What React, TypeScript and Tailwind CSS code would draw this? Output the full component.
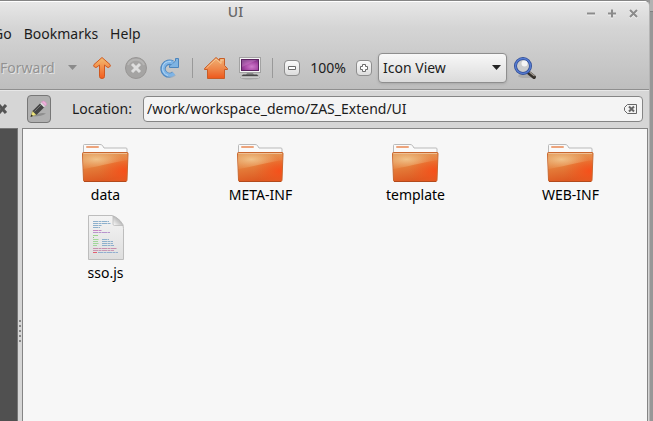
import React, { useState } from "react";

const files = [
  { name: "data", kind: "folder" },
  { name: "META-INF", kind: "folder" },
  { name: "template", kind: "folder" },
  { name: "WEB-INF", kind: "folder" },
  { name: "sso.js", kind: "script" },
];

function FolderIcon() {
  return (
    <svg width="48" height="48" viewBox="1 -4 48 48" aria-hidden="true">
      <defs>
        <linearGradient id="folderBody" x1="0" y1="0" x2="0.25" y2="1">
          <stop offset="0" stopColor="#df9450" />
          <stop offset="0.5" stopColor="#e5803c" />
          <stop offset="1" stopColor="#dd5a22" />
        </linearGradient>
        <radialGradient id="folderShine" cx="0.3" cy="0.4" r="0.6">
          <stop offset="0" stopColor="#f4d09a" stopOpacity="0.8" />
          <stop offset="1" stopColor="#f0b982" stopOpacity="0.15" />
        </radialGradient>
        <radialGradient id="folderGlow" cx="0.95" cy="0.65" r="0.6">
          <stop offset="0" stopColor="#f6501a" />
          <stop offset="1" stopColor="#f05a20" stopOpacity="0" />
        </radialGradient>
      </defs>
      <path d="M2.500 18V6.500q0-1 1-1H19q1.500 0 2.500 1l1.500 2.500H45q1 0 1 1V18z" fill="#fafafa" stroke="#b9b9b9" />
      <rect x="5" y="7" width="13" height="2" rx="1" fill="#eda47c" />
      <path d="M1.500 14.500q0-1 1-1h43.500q1 0 1 1L46 41q0 1.500-1.500 1.500H4Q2.500 42.500 2.500 41z" fill="url(#folderBody)" stroke="#c9672f" />
      <path d="M2 14h44.500L45.500 42H3z" fill="url(#folderGlow)" />
      <path d="M2 14h44.500v7Q35 23 22 26T2 30z" fill="url(#folderShine)" />
      <path d="M2.500 14.500h43.500" stroke="#eebf94" />
      <path d="M3 42.500h42" stroke="#b34a1c" />
    </svg>
  );
}

const codeLines: [number, number, number, string][] = [
  [11, 7, 16, "#8db0cc"], [11, 9, 18, "#8db0cc"], [11, 11, 9, "#8db0cc"], [11, 13, 7, "#8db0cc"],
  [11, 16, 9, "#c687c4"], [11, 18, 17, "#b895cd"], [11, 21, 5, "#9bd58d"], [11, 23, 1, "#8bc581"],
  [11, 25, 6, "#a1d79a"], [20, 25, 7, "#8db0cc"], [11, 27, 5, "#a1d79a"], [20, 27, 11, "#8db0cc"],
  [11, 29, 6, "#a1d79a"], [20, 29, 11, "#8db0cc"], [11, 31, 4, "#a1d79a"], [20, 31, 12, "#8db0cc"],
  [11, 34, 24, "#c88fad"], [11, 36, 21, "#c898b4"], [11, 38, 4, "#e35f70"], [16, 38, 20, "#92afd0"],
];

function ScriptIcon() {
  return (
    <svg width="48" height="48" viewBox="0 0 48 48" aria-hidden="true">
      <defs>
        <linearGradient id="paper" x1="0" y1="0" x2="0" y2="1">
          <stop offset="0" stopColor="#f4f4f4" />
          <stop offset="1" stopColor="#dedede" />
        </linearGradient>
        <linearGradient id="fold" x1="0" y1="1" x2="1" y2="0">
          <stop offset="0" stopColor="#ffffff" />
          <stop offset="0.5" stopColor="#c4c4c4" />
        </linearGradient>
      </defs>
      <path d="M6.500 2.500H30q4 1 8 5t3.500 8V46.500h-35z" fill="url(#paper)" stroke="#bdbdbd" />
      <path d="M31 3v8q0 1.500 1.500 1.500H41Q38 6 31 3z" fill="url(#fold)" stroke="#b4b4b4" strokeWidth="0.700" />
      {codeLines.map(([x, y, w, color], i) => (
        <path key={i} d={`M${x} ${y + 1.5}h${w}`} stroke={color} strokeDasharray="5 0.500 3 0.500" />
      ))}
    </svg>
  );
}

function UpIcon() {
  return (
    <svg width="20" height="24" viewBox="0 0 20 24" aria-hidden="true">
      <defs>
        <linearGradient id="up" x1="0" y1="0" x2="0" y2="1">
          <stop offset="0" stopColor="#f3bd72" />
          <stop offset="1" stopColor="#f35c1d" />
        </linearGradient>
      </defs>
      <path d="M10 1.500L18 8.500q1 1.500-.5 2.500t-2.500 0L12.500 9V20.500q0 2-2.500 2t-2.500-2V9L5 11q-1 1-2.500 0T2 8.500z" fill="url(#up)" stroke="#cf5820" strokeLinejoin="round" />
    </svg>
  );
}

function StopIcon() {
  return (
    <svg width="24" height="24" viewBox="0 0 24 24" aria-hidden="true">
      <circle cx="12" cy="12" r="10.500" fill="#a5a4a3" stroke="#989695" />
      <path d="M4 9a8.500 8 0 0 1 16 0" fill="none" stroke="#b5b4b3" strokeWidth="2" />
      <path d="M8 8l8 8M16 8l-8 8" stroke="#dedede" strokeWidth="3" />
    </svg>
  );
}

function ReloadIcon() {
  return (
    <svg width="22" height="24" viewBox="0 0 22 24" aria-hidden="true">
      <defs>
        <linearGradient id="reloadTail" x1="0" y1="0" x2="1" y2="1">
          <stop offset="0.700" stopColor="#4c85bd" />
          <stop offset="1" stopColor="#4c85bd" stopOpacity="0.300" />
        </linearGradient>
      </defs>
      <path d="M14.500 7A6.500 6.500 0 1 0 16 17.500" fill="none" stroke="url(#reloadTail)" strokeWidth="5.500" />
      <path d="M20.500 2.500V11.500H11.500V9.500L14 8 17.500 5V2.500z" fill="#7eb3e2" stroke="#4c85bd" />
      <path d="M15 7A6.500 6.500 0 1 0 16 17.500" fill="none" stroke="#7eb4e6" strokeWidth="3.500" />
      <path d="M13 5.500Q5 5 4.500 12.500 5 18 10 19.500" fill="none" stroke="#b3d6f4" />
    </svg>
  );
}

function HomeIcon() {
  return (
    <svg width="26" height="24" viewBox="0 0 26 24" aria-hidden="true">
      <defs>
        <linearGradient id="home" x1="0" y1="0" x2="0" y2="1">
          <stop offset="0" stopColor="#f0b477" />
          <stop offset="0.600" stopColor="#ee8144" />
          <stop offset="1" stopColor="#ee571b" />
        </linearGradient>
      </defs>
      <path d="M13 1.500L16.500 4.500V2.500H21.500V9.500L24.500 12.500V13.500H21.500V22.500H4.500V13.500H1.500V12.500z" fill="url(#home)" stroke="#c75d27" strokeLinejoin="round" />
      <path d="M3.500 12L13 3l5 4.500V4h2.500" fill="none" stroke="#f7cfa0" strokeWidth="0.800" />
    </svg>
  );
}

function ComputerIcon() {
  return (
    <svg width="24" height="24" viewBox="0 0 24 24" aria-hidden="true">
      <defs>
        <radialGradient id="screen" cx="0.600" cy="0.650" r="0.700">
          <stop offset="0" stopColor="#cf7ccb" />
          <stop offset="0.600" stopColor="#a545a3" />
          <stop offset="1" stopColor="#74307c" />
        </radialGradient>
      </defs>
      <rect x="1.500" y="1.500" width="21" height="15" fill="#f4f4f4" stroke="#a2a2a2" />
      <rect x="3.500" y="3.500" width="17" height="11" fill="url(#screen)" stroke="#5c2261" />
      <path d="M4 4h15L4 11z" fill="#e5b5e4" fillOpacity="0.25" />
      <path d="M9 17h6l1 2H8z" fill="#8a8a8a" />
      <ellipse cx="12" cy="21.500" rx="10" ry="2" fill="#a5a5a5" />
      <path d="M5 18.500h14l2 2H3z" fill="#484848" />
      <path d="M3 21h18" stroke="#efefef" />
    </svg>
  );
}

function SearchIcon() {
  return (
    <svg width="24" height="24" viewBox="0 0 24 24" aria-hidden="true">
      <ellipse cx="13" cy="20" rx="8" ry="2" fill="#969696" fillOpacity="0.500" />
      <path d="M16 17l5 4" stroke="#35312c" strokeWidth="4" strokeLinecap="round" />
      <path d="M16.500 16l5 4" stroke="#a49d93" strokeWidth="1.200" />
      <circle cx="10" cy="10" r="7.500" fill="#cbcccd" stroke="#2f4b93" strokeWidth="3" />
      <circle cx="10" cy="10" r="7.500" fill="none" stroke="#557bd0" strokeWidth="1.500" />
      <circle cx="11.500" cy="7.500" r="3" fill="#f4f4f4" />
    </svg>
  );
}

function PencilIcon() {
  return (
    <svg width="20" height="20" viewBox="0 0 20 20" className="shrink-0" aria-hidden="true">
      <path d="M4 17.500q8-5 13-3-4 3-13 3z" fill="#8e8e8e" />
      <path d="M2 17.500l1.500-5.500 4 3.500z" fill="#efe67e" stroke="#8f8a45" strokeWidth="0.500" />
      <path d="M3.500 12l8.500-8.500 4 4L7.500 16z" fill="#444" />
      <path d="M5.500 12.500l7.500-7.500" stroke="#777" />
      <path d="M11 4.500l4 4 1.500-1.500-4-4z" fill="#dcdcdc" />
      <path d="M12.500 3q2-2 4 0t0 4z" fill="#eeb0da" stroke="#d592c2" strokeWidth="0.700" />
      <path d="M1.500 18l1-2.500 1.500 1.500z" fill="#222" />
    </svg>
  );
}

function ZoomButton({ plus, onClick }: { plus?: boolean; onClick: () => void }) {
  return (
    <button
      type="button"
      onClick={onClick}
      aria-label={plus ? "Zoom in" : "Zoom out"}
      className="flex size-4 shrink-0 items-center justify-center rounded-sm border border-[#8e8e8e] bg-gradient-to-b from-[#fafafa] to-[#dddddd]"
    >
      <svg width="10" height="10" viewBox="0 0 10 10" className="shrink-0" aria-hidden="true">
        <path
          d={plus ? "M3.500 1.500h3v2h2v3h-2v2h-3v-2h-2v-3h2z" : "M1.500 3.500h7v3h-7z"}
          fill="#fff"
          stroke="#6b6b6b"
        />
      </svg>
    </button>
  );
}

function Separator() {
  return <div className="h-5 w-px shrink-0 bg-[#999999]" />;
}

export default function App() {
  const [path, setPath] = useState("/work/workspace_demo/ZAS_Extend/UI");
  const [zoom, setZoom] = useState(100);

  return (
    <div className="flex h-screen w-full overflow-hidden bg-[#979797] font-['Noto_Sans',sans-serif] text-sm leading-5 text-[#1c1c1c]">
      <div className="flex min-w-0 grow flex-col overflow-hidden rounded-tr-md border-t border-r border-[#858585] border-r-[#b5b5b5] bg-[#d6d6d6]">
        <div className="shrink-0 border-b border-[#8f8f8f] bg-gradient-to-b from-[#e8e8e8] via-[#d5d5d5] via-30% to-[#bebebe]">
          <header className="flex h-[23px] items-center border-t border-white pr-[7px] pb-0.5">
            <h1 className="grow pr-28 text-center text-sm font-medium text-[#686868]">UI</h1>
            <div className="flex shrink-0 gap-1 text-[#8b8b8b]">
              {[
                ["Minimize", "M4 9.500h8"],
                ["Maximize", "M4 9.500h8M8 5.500v8"],
                ["Close", "M5 6l7 7M12 6l-7 7"],
              ].map(([label, d]) => (
                <button key={label} type="button" aria-label={label} className="size-[17px]">
                  <svg width="17" height="17" viewBox="0 0 17 17" fill="none" strokeWidth="2" aria-hidden="true">
                    <path d={d} stroke="#f4f4f4" transform="translate(0 1)" />
                    <path d={d} stroke="currentColor" />
                  </svg>
                </button>
              ))}
            </div>
          </header>
          <nav className="-ml-[7px] flex h-5 items-center gap-3">
            <button type="button">Go</button>
            <button type="button">Bookmarks</button>
            <button type="button">Help</button>
          </nav>
          <div className="flex h-[45px] items-center pt-0.5">
            <button type="button" className="w-14 shrink-0 text-left text-[#929292] [text-shadow:1px_1px_0_#e4e4e4]">Forward</button>
            <button type="button" aria-label="Forward history" className="ml-3 shrink-0">
              <svg width="9" height="5" viewBox="0 0 9 5" className="fill-[#8a8a8a]" aria-hidden="true"><path d="M0 0h9L4.500 5z" /></svg>
            </button>
            <button type="button" aria-label="Up" className="ml-[15px] shrink-0"><UpIcon /></button>
            <button type="button" aria-label="Stop" className="ml-3 shrink-0"><StopIcon /></button>
            <button type="button" aria-label="Reload" className="mr-3 ml-2.5 shrink-0"><ReloadIcon /></button>
            <Separator />
            <button type="button" aria-label="Home" className="ml-2.5 shrink-0"><HomeIcon /></button>
            <button type="button" aria-label="Computer" className="mr-2.5 ml-[9px] shrink-0"><ComputerIcon /></button>
            <Separator />
            <div className="mr-1.5 ml-[11px] flex shrink-0 items-center">
              <ZoomButton onClick={() => setZoom(Math.max(25, zoom - 25))} />
              <span className="w-14 text-center">{zoom}%</span>
              <ZoomButton plus onClick={() => setZoom(zoom + 25)} />
            </div>
            <div className="relative w-[129px] shrink-0">
              <select
                aria-label="View mode"
                className="h-[30px] w-full appearance-none rounded-sm border border-[#8e8e8e] bg-gradient-to-b from-[#f8f8f8] to-[#dbdbdb] pl-1 text-sm shadow-sm"
              >
                <option>Icon View</option>
                <option>List View</option>
                <option>Compact View</option>
              </select>
              <svg width="9" height="5" viewBox="0 0 9 5" className="pointer-events-none absolute top-3 right-1.5" aria-hidden="true"><path d="M0 0h9L4.500 5z" fill="#222" /></svg>
            </div>
            <button type="button" aria-label="Search" className="ml-1.5 shrink-0"><SearchIcon /></button>
          </div>
        </div>

        <div className="flex h-[38px] shrink-0 items-center border-t border-[#e7e7e7] pr-1.5 pb-0.5">
          <button type="button" aria-label="Close side pane" className="-ml-0.5 w-[29px] shrink-0">
            <svg width="10" height="12" viewBox="0 0 10 12" aria-hidden="true"><path d="M1 2l7 8M8 2l-7 8" stroke="#555" strokeWidth="3" /></svg>
          </button>
          <button type="button" aria-label="Edit location" aria-pressed="true" className="flex h-7 w-6 shrink-0 items-center justify-center rounded-sm border border-[#777] bg-[#b0b0b0]">
            <PencilIcon />
          </button>
          <label htmlFor="location" className="ml-[21px] w-[71px] shrink-0">Location:</label>
          <div className="flex h-[26px] min-w-0 grow items-center rounded-sm border border-[#858585] bg-[#f4f4f4] pr-1 pl-[3px]">
            <input
              id="location"
              value={path}
              onChange={(e) => setPath(e.target.value)}
              className="min-w-0 grow bg-transparent outline-none"
            />
            <button type="button" aria-label="Clear" onClick={() => setPath("")} className="shrink-0">
              <svg width="15" height="12" viewBox="0 0 15 12" fill="none" stroke="#666" aria-hidden="true">
                <path d="M4.500 1.500h9v9h-9L1.500 7.500v-3z" />
                <path d="M6 3.500l5 5M11 3.500l-5 5" strokeWidth="2" />
              </svg>
            </button>
          </div>
        </div>

        <div className="flex min-h-0 grow">
          <aside className="w-[18px] shrink-0 border-t border-r border-[#777] bg-[#505050]" />
          <div className="flex w-1 shrink-0 flex-col items-center justify-center gap-[3px] pt-28">
            {[0, 1, 2, 3, 4].map((dot) => (
              <span key={dot} className="size-0.5 bg-[#888]" />
            ))}
          </div>
          <main className="min-w-0 grow border border-b-0 border-[#858585] bg-[#f7f7f7]">
            <ul className="flex flex-wrap gap-x-[30px] pt-1.5 pl-5">
              {files.map((file) => (
                <li key={file.name} className="flex h-[78px] w-[125px] flex-col items-center gap-0.5">
                  {file.kind === "folder" ? <FolderIcon /> : <ScriptIcon />}
                  <span className="h-5 text-black">{file.name}</span>
                </li>
              ))}
            </ul>
          </main>
          <div className="w-px shrink-0" />
        </div>
      </div>
      <div className="w-[3px] shrink-0">
        <div className="h-3 border-b border-[#808080] bg-[#b2b2b2]" />
      </div>
    </div>
  );
}
